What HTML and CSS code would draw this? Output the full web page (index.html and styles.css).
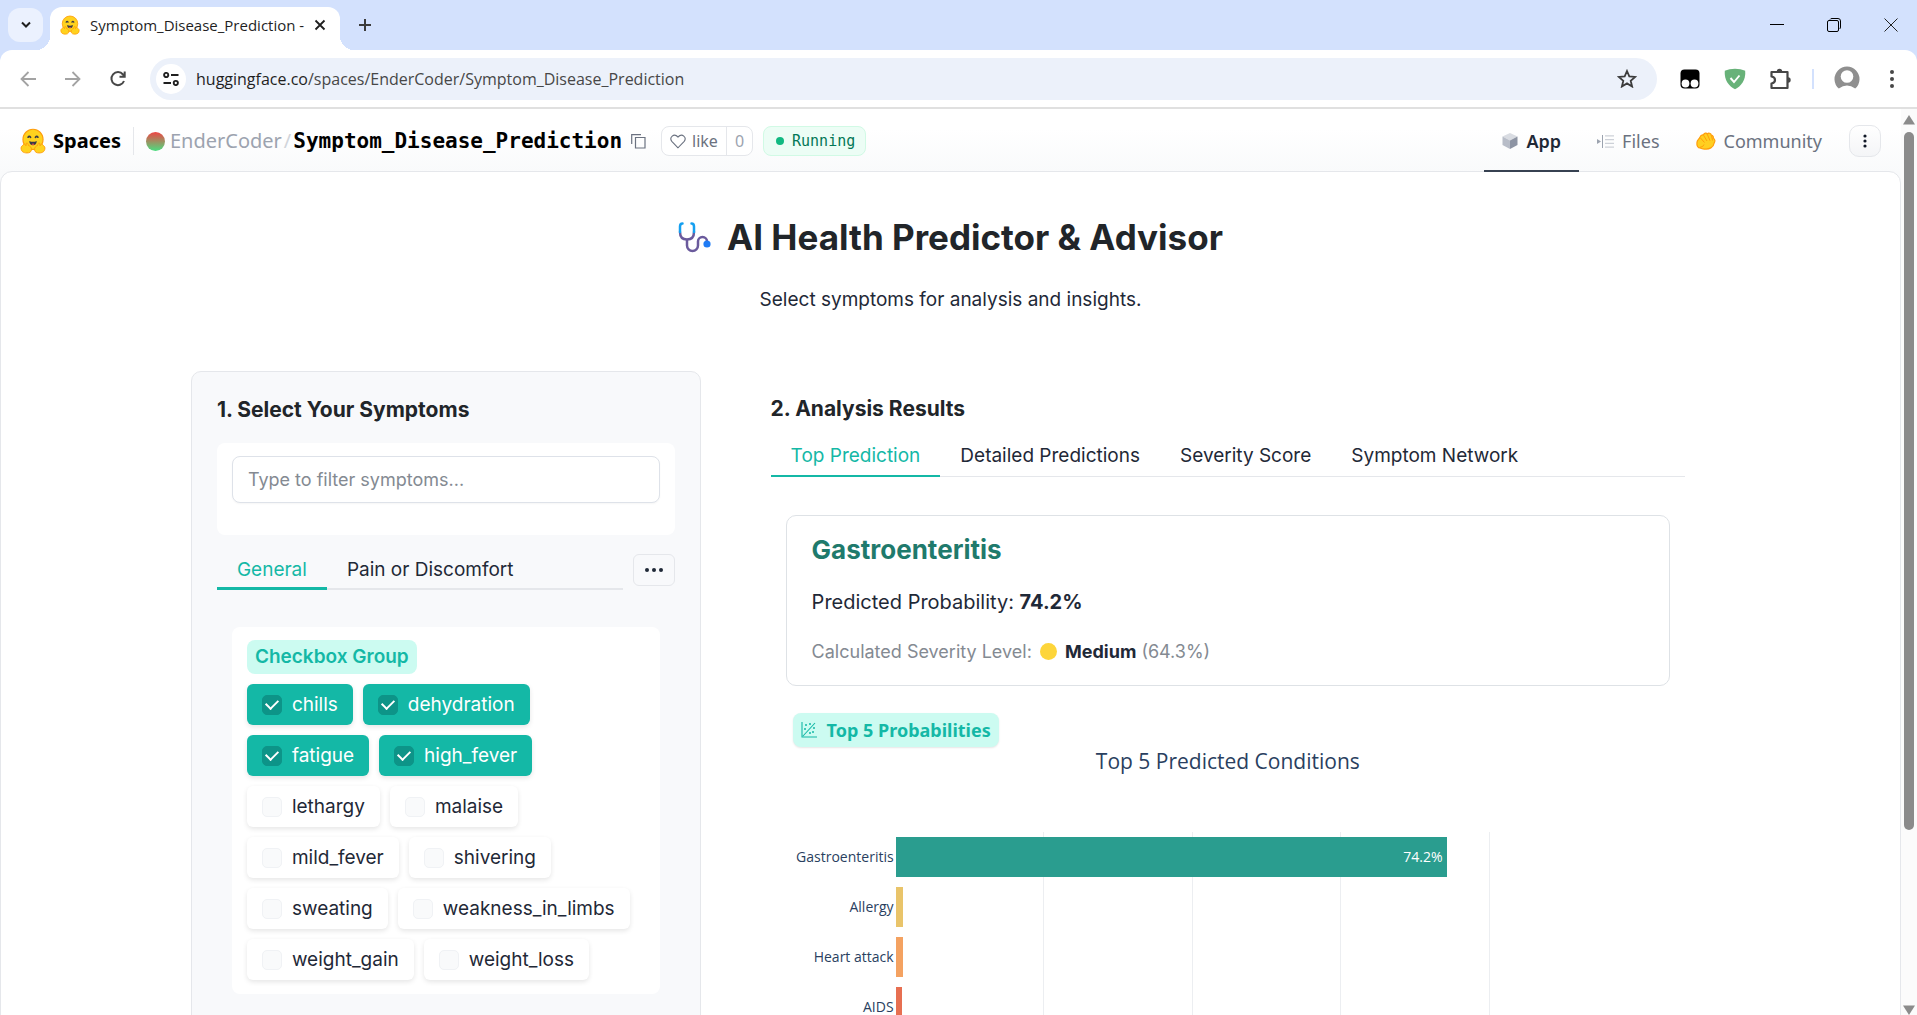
FILE: index.html
```html
<!DOCTYPE html>
<html lang="en">
<head>
<meta charset="utf-8">
<title>Symptom_Disease_Prediction</title>
<link rel="stylesheet" href="styles.css">
</head>
<body>
<svg width="0" height="0" class="defs" aria-hidden="true">
  <defs>
    <symbol id="hug" viewBox="0 0 24 24">
      <circle cx="12" cy="10.500" r="9.300" fill="#ffd21e" stroke="#ff9d0b"/>
      <path d="M7.500 8.500q1-1.500 2.200 0M14.300 8.500q1.200-1.500 2.200 0" stroke="#3a3b45" stroke-width="1.600" fill="none" stroke-linecap="round"/>
      <path d="M8.500 12q3.500 1.600 7 0q-.4 4-3.500 4t-3.500-4z" fill="#3a3b45"/>
      <path d="M10.500 15q1.500-1.200 3 0q-1.500 1.300-3 0z" fill="#ef4e4e"/>
      <path d="M3 15.500c1-1.500 2 0 2.500.8l.3-2.300c1.300-.8 1.800 1 2 2.200c1.600.3 3.200 2 2.700 4.300c-.3 1.800-2 2.500-4 2.500c-3 0-5.500-1-5.500-4.500c0-1.400 1-2 2-3zM21 15.500c-1-1.500-2 0-2.500.8l-.3-2.300c-1.300-.8-1.800 1-2 2.200c-1.600.3-3.200 2-2.700 4.300c.3 1.800 2 2.500 4 2.500c3 0 5.500-1 5.500-4.500c0-1.400-1-2-2-3z" fill="#ffd21e" stroke="#ff9d0b" stroke-width=".9"/>
    </symbol>
  </defs>
</svg>
<div class="browser">
  <header class="tabstrip">
    <button class="tab-search" aria-label="Search tabs"><svg width="12" height="8" viewBox="0 0 12 8"><path d="M2 1.500l4 4 4-4" fill="none" stroke="#1f1f1f" stroke-width="2"/></svg></button>
    <div class="tab">
      <svg width="20" height="20"><use href="#hug"/></svg>
      <span class="tab-title">Symptom_Disease_Prediction - </span>
      <button class="icon-btn" aria-label="Close tab"><svg width="12" height="12" viewBox="0 0 12 12"><path d="M1.500 1.500l9 9M10.500 1.500l-9 9" stroke="#1f1f1f" stroke-width="1.800"/></svg></button>
    </div>
    <button class="icon-btn new-tab" aria-label="New tab"><svg width="14" height="14" viewBox="0 0 14 14"><path d="M7 1v12M1 7h12" stroke="#3c3c3c" stroke-width="2"/></svg></button>
    <div class="window-controls">
      <button class="icon-btn" aria-label="Minimize"><svg width="14" height="14" viewBox="0 0 14 14"><path d="M0 6.500h14" stroke="#000"/></svg></button>
      <button class="icon-btn" aria-label="Restore"><svg width="14" height="14" viewBox="0 0 14 14"><path d="M3 1.500Q3.500.5 5 .5h6Q13.500.5 13.500 3v6q0 1.500-1 2M.5 4q0-1.500 1.500-1.500h8q1.500 0 1.500 1.500v8q0 1.500-1.500 1.500H2Q.5 13.500.5 12z" fill="none" stroke="#000"/></svg></button>
      <button class="icon-btn" aria-label="Close"><svg width="14" height="14" viewBox="0 0 14 14"><path d="M.5.5l13 13M13.500.5l-13 13" stroke="#222"/></svg></button>
    </div>
  </header>
  <div class="toolbar">
    <div class="nav-buttons">
      <button class="icon-btn" aria-label="Back"><svg width="16" height="16" viewBox="0 0 16 16"><path d="M16 8H2M8.500 1L1.500 8l7 7" fill="none" stroke="#a3a3a3" stroke-width="1.800"/></svg></button>
      <button class="icon-btn" aria-label="Forward"><svg width="16" height="16" viewBox="0 0 16 16"><path d="M0 8h14M7.500 1l7 7-7 7" fill="none" stroke="#a3a3a3" stroke-width="1.800"/></svg></button>
      <button class="icon-btn" aria-label="Reload"><svg width="16" height="16" viewBox="0 0 16 16"><path d="M14 10a6.500 6.500 0 1 1-1-6.500L14.500 5M14.700.5v5.200H9.500" fill="none" stroke="#474747" stroke-width="2"/></svg></button>
    </div>
    <div class="omnibox">
      <button class="site-info" aria-label="View site information"><svg width="16" height="14" viewBox="0 0 16 14"><g fill="none" stroke="#1f1f1f" stroke-width="1.900"><circle cx="3.200" cy="3" r="2.100"/><path d="M8 3h7.500M.5 11H8"/><circle cx="12.800" cy="11" r="2.100"/></g></svg></button>
      <div class="url"><span class="host">huggingface.co</span>/spaces/EnderCoder/Symptom_Disease_Prediction</div>
      <button class="icon-btn" aria-label="Bookmark"><svg width="20" height="19" viewBox="0 0 20 19"><path d="M10 2l2.300 5.400 5.900.5-4.500 3.900 1.400 5.700L10 14.400l-5.100 3.100 1.400-5.700L1.800 7.900l5.900-.5z" fill="none" stroke="#3c3c3c" stroke-width="1.800"/></svg></button>
    </div>
    <div class="extensions">
      <button class="icon-btn" aria-label="Tampermonkey"><svg width="20" height="20" viewBox="0 0 20 20"><rect x=".5" y=".5" width="19" height="19" rx="4"/><circle cx="5.500" cy="14.500" r="3.900" fill="#fff"/><circle cx="14.500" cy="14.500" r="3.900" fill="#fff"/></svg></button>
      <button class="icon-btn" aria-label="AdGuard"><svg width="22" height="22" viewBox="0 0 22 22"><path d="M11 .8C7.500.8 3.500 1.500.8 2.800 0 12 5 18.500 11 21.200 17 18.500 22 12 21.200 2.800 18.500 1.500 14.500.8 11 .8z" fill="#68b279"/><path d="M6.500 10l3.500 4 5.500-6.500" fill="none" stroke="#fff" stroke-width="1.900"/></svg></button>
      <button class="icon-btn" aria-label="Extensions"><svg width="22" height="22" viewBox="0 0 22 22"><path d="M1.500 4h16v16h-16v-4.500q3.500-.5 3.500-3.500T1.500 8.500z" fill="none" stroke="#474747" stroke-width="2.200" stroke-linejoin="round"/><path d="M6.800 3.500a2.700 2.700 0 0 1 5.400 0zM18 9.300a2.700 2.700 0 0 1 0 5.400z" fill="#474747"/></svg></button>
    </div>
    <span class="divider"></span>
    <div class="profile">
      <button class="icon-btn" aria-label="Profile"><svg width="26" height="26" viewBox="0 0 26 26"><path d="M4.800 22.500A12.500 12.500 0 1 1 21.200 22.500Q13 16.500 4.800 22.500z" fill="#8f8f8f"/><circle cx="13" cy="10.500" r="6.300" fill="#fff"/></svg></button>
      <button class="icon-btn" aria-label="Menu"><svg width="4" height="18" viewBox="0 0 4 18"><g fill="#474747"><circle cx="2" cy="2" r="2"/><circle cx="2" cy="9" r="2"/><circle cx="2" cy="16" r="2"/></g></svg></button>
    </div>
  </div>
  <div class="viewport">
    <div class="page">
      <header class="space-header">
        <a class="spaces" href="#"><svg width="26" height="26"><use href="#hug"/></svg>Spaces</a>
        <div class="repo">
          <span class="avatar"></span>
          <a class="owner" href="#">EnderCoder</a><span class="slash">/</span><a class="name" href="#">Symptom_Disease_Prediction</a>
          <button class="icon-btn" aria-label="Copy name"><svg width="15" height="15" viewBox="0 0 15 15"><path d="M4.500 3.500h9.500v10.500h-9.500zM.7 10V.7H10" fill="none" stroke="#6b7280" stroke-width="1.200"/></svg></button>
        </div>
        <div class="like">
          <button class="like-btn"><svg width="16" height="15" viewBox="0 0 16 15"><path d="M8 13.800L1.800 7.300C-1 3.800 3.700-1.500 8 3c4.300-4.500 9 .8 6.200 4.300z" fill="none" stroke="#6b7280" stroke-width="1.100"/></svg>like</button>
          <span class="like-count">0</span>
        </div>
        <span class="status">Running</span>
        <nav class="space-nav">
          <a class="nav-item active" href="#"><svg width="16" height="16" viewBox="0 0 16 16"><path d="M8 0l7.500 3.500L8 7.500.5 3.500z" fill="#d9dce2"/><path d="M.5 3.500L8 7.500V16L.5 12z" fill="#b8bdc8"/><path d="M15.500 3.500L8 7.500V16l7.500-4z" fill="#8d94a3"/></svg>App</a>
          <a class="nav-item" href="#"><svg width="17" height="13" viewBox="0 0 17 13"><path d="M0 4l4 2.500L0 9z" fill="#9ca3af"/><path d="M5.500 0v13" stroke="#9ca3af"/><path d="M8 .8h9M8 4.600h9M8 8.400h9M8 12.200h9" stroke="#cdd1d8" stroke-width="1.300"/></svg>Files</a>
          <a class="nav-item" href="#"><svg width="20" height="18" viewBox="0 0 20 18"><path d="M1 11C.5 8.500 3 7.500 3.800 5.500S6 2.500 7.500 3C8 .8 10.500.6 11.300 2.200c1-1.600 3.700-1.200 4 1 1.700.2 2.300 1.700 2 3.100 1.800.6 2 3 .9 4.700C17.500 15.500 13 17.500 9 17c-2.500.3-4-.5-5-1-2 0-3.500-2.500-3-5z" fill="#ffcf20" stroke="#ff9d0b" stroke-width="1.200"/><path d="M7.700 3.500l3.300 5.500M11.500 2.700l2.500 6M15.500 3.500l1 5M4.500 6l4 4.500M3.500 15.500q4-.5 4.500-3" stroke="#ff9d0b" fill="none"/></svg>Community</a>
          <button class="more" aria-label="More"><svg width="4" height="14" viewBox="0 0 4 14"><g fill="#111827"><circle cx="2" cy="2" r="1.600"/><circle cx="2" cy="7" r="1.600"/><circle cx="2" cy="12" r="1.600"/></g></svg></button>
        </nav>
      </header>
      <main class="app">
        <h1 class="title"><svg width="33" height="31" viewBox="0 0 33 31"><g fill="none" stroke-width="2.500" stroke-linecap="round"><path d="M2 10q0 7.500 7 7.500t7-7.500" stroke="#6a5a9c"/><path d="M4.500 1.500Q2 1.500 2 4.500V10M13.500 1.500Q16 1.500 16 4.500V10" stroke="#149ff0"/><path d="M9 18v5.500a5.500 5.500 0 0 0 11 0V19.500a4.500 4.500 0 0 1 9 0" stroke="#6a5a9c"/></g><circle cx="29" cy="22" r="3.600" fill="#1f7cf5"/></svg>AI Health Predictor &amp; Advisor</h1>
        <p class="subtitle">Select symptoms for analysis and insights.</p>
        <div class="columns">
          <section class="symptoms">
            <h2>1. Select Your Symptoms</h2>
            <div class="filter"><input type="text" aria-label="Filter symptoms" placeholder="Type to filter symptoms..."></div>
            <div class="tabs-row">
              <div class="tabs thick"><button class="tab-btn selected">General</button><button class="tab-btn">Pain or Discomfort</button></div>
              <button class="overflow" aria-label="More categories"><svg width="18" height="4" viewBox="0 0 18 4"><g fill="#1f2937"><circle cx="2" cy="2" r="2"/><circle cx="9" cy="2" r="2"/><circle cx="16" cy="2" r="2"/></g></svg></button>
            </div>
            <fieldset class="group" aria-labelledby="group-label">
              <span class="badge" id="group-label">Checkbox Group</span>
              <div class="chips">
                <label class="chip"><input type="checkbox" checked>chills</label>
                <label class="chip"><input type="checkbox" checked>dehydration</label>
                <label class="chip"><input type="checkbox" checked>fatigue</label>
                <label class="chip"><input type="checkbox" checked>high_fever</label>
                <label class="chip"><input type="checkbox">lethargy</label>
                <label class="chip"><input type="checkbox">malaise</label>
                <label class="chip"><input type="checkbox">mild_fever</label>
                <label class="chip"><input type="checkbox">shivering</label>
                <label class="chip"><input type="checkbox">sweating</label>
                <label class="chip"><input type="checkbox">weakness_in_limbs</label>
                <label class="chip"><input type="checkbox">weight_gain</label>
                <label class="chip"><input type="checkbox">weight_loss</label>
              </div>
            </fieldset>
          </section>
          <section class="results">
            <h2>2. Analysis Results</h2>
            <div class="tabs"><button class="tab-btn selected">Top Prediction</button><button class="tab-btn">Detailed Predictions</button><button class="tab-btn">Severity Score</button><button class="tab-btn">Symptom Network</button></div>
            <div class="panel">
              <article class="prediction">
                <h3>Gastroenteritis</h3>
                <p class="probability">Predicted Probability: <strong>74.2%</strong></p>
                <p class="severity">Calculated Severity Level: <span class="dot"></span> <strong>Medium</strong> (64.3%)</p>
              </article>
              <figure class="chart">
                <figcaption class="badge chart-badge"><svg width="16" height="16" viewBox="0 0 16 16"><path d="M1 0v15h15M2 14L14 1" fill="none" stroke="#14b8a6" stroke-width="1.100"/><g fill="#14b8a6"><circle cx="5" cy="3" r="1"/><circle cx="4" cy="7" r="1"/><circle cx="9" cy="2" r="1"/><circle cx="9" cy="11" r="1"/><circle cx="13" cy="6" r="1"/><circle cx="12" cy="10" r="1"/></g></svg>Top 5 Probabilities</figcaption>
                <h4>Top 5 Predicted Conditions</h4>
                <div class="plot">
                  <div class="gridlines"><i></i><i></i><i></i><i></i></div>
                  <div class="rows">
                    <div class="row"><span class="label">Gastroenteritis</span><span class="track"><span class="bar teal" style="width:74.200%">74.2%</span></span></div>
                    <div class="row"><span class="label">Allergy</span><span class="track"><span class="bar yellow" style="width:1%"></span></span></div>
                    <div class="row"><span class="label">Heart attack</span><span class="track"><span class="bar orange" style="width:1%"></span></span></div>
                    <div class="row"><span class="label">AIDS</span><span class="track"><span class="bar red" style="width:0.900%"></span></span></div>
                  </div>
                </div>
              </figure>
            </div>
          </section>
        </div>
      </main>
    </div>
    <div class="scrollbar" aria-hidden="true">
      <svg width="12" height="10" viewBox="0 0 12 10"><path d="M6 0l6 9.500H0z" fill="#8b8b8b"/></svg>
      <div class="scroll-track"><div class="thumb"></div></div>
      <svg width="12" height="10" viewBox="0 0 12 10"><path d="M6 10l6-9.500H0z" fill="#8b8b8b"/></svg>
    </div>
  </div>
</div>
</body>
</html>
```

FILE: styles.css
```css
* { box-sizing: border-box; }
body { margin: 0; font-family: Inter, "Noto Sans", sans-serif; color: #1f2937; background: #fff; }
button { font: inherit; color: inherit; border: 0; background: none; padding: 0; cursor: pointer; }
a { color: inherit; text-decoration: none; }
h1, h2, h3, h4, p, figure { margin: 0; }
svg { display: block; flex: none; }
.defs { position: absolute; }
.icon-btn { display: flex; align-items: center; justify-content: center; }

.browser { height: 100vh; display: flex; flex-direction: column; overflow: hidden; background: #d3e1fd; }
.tabstrip { display: flex; height: 50px; padding: 0 19px 0 8px; font-family: "Open Sans", sans-serif; flex: none; }
.tab-search { width: 35px; height: 34px; margin: 8px 7px 0 0; border-radius: 12px; background: #ebf1fe; display: flex; align-items: center; justify-content: center; }
.tab { width: 290px; margin-top: 7px; padding: 0 14px 8px 10px; background: #fff; border-radius: 12px 12px 0 0; display: flex; align-items: center; justify-content: space-between; position: relative; }
.tab::before, .tab::after { content: ""; position: absolute; bottom: 0; width: 14px; height: 14px; }
.tab::before { left: -14px; background: radial-gradient(circle at 0 0, transparent 14px, #fff 14px); }
.tab::after { right: -14px; background: radial-gradient(circle at 100% 0, transparent 14px, #fff 14px); }
.tab-title { flex: 1; margin-left: 10px; font-size: 15px; line-height: 20px; white-space: nowrap; color: #1f1f1f; }
.new-tab { margin: 0 0 0 18px; }
.window-controls { margin-left: auto; display: flex; gap: 43px; }

.toolbar { height: 59px; flex: none; background: #fff; border-bottom: 2px solid #e0e0e0; border-radius: 12px 12px 0 0; display: flex; align-items: center; padding: 0 23px 0 20px; font-family: "Open Sans", sans-serif; }
.nav-buttons { display: flex; gap: 29px; margin-right: 24px; }
.omnibox { flex: 1; height: 42px; border-radius: 21px; background: #ecf1fa; display: flex; align-items: center; padding: 0 20px 0 6px; gap: 10px; }
.site-info { width: 30px; height: 30px; border-radius: 50%; background: #fff; display: flex; align-items: center; justify-content: center; }
.url { flex: 1; font-size: 16px; line-height: 24px; color: #474747; }
.host { color: #1f1f1f; }
.extensions { display: flex; align-items: center; gap: 24px; margin-left: 23px; }
.divider { width: 2px; height: 20px; margin: 0 20px; background: #d3e1fd; }
.profile { display: flex; align-items: center; gap: 30px; }

.viewport { flex: 1; min-height: 0; display: flex; background: #fafafa; }
.page { flex: 1; min-width: 0; overflow: hidden; background: linear-gradient(#fff 20px, #f9fafb 63px); }
.scrollbar { width: 16px; flex: none; padding: 6px 0 0; display: flex; flex-direction: column; align-items: center; background: #fbfbfb; }
.scroll-track { flex: 1; width: 100%; padding-top: 7px; }
.thumb { width: 10px; height: 80%; margin: 0 auto; border-radius: 5px; background: #8b8b8b; }

.space-header { height: 62px; display: flex; align-items: center; padding: 2px 20px 0 20px; font-family: "Noto Sans", sans-serif; }
.spaces { display: flex; align-items: center; gap: 7px; font-size: 20px; line-height: 28px; font-weight: 700; color: #000; margin-right: 12px; }
.repo { display: flex; align-items: center; font-size: 20px; line-height: 28px; border-left: 1px solid #e5e7eb; padding-left: 12px; }
.avatar { width: 19px; height: 19px; border-radius: 50%; background: linear-gradient(#ef4444, #4ade80); margin-right: 5px; }
.owner { color: #9ca3af; }
.slash { color: #d1d5db; margin: 0 2px; }
.name { font-family: "DejaVu Sans Mono", monospace; font-size: 21px; font-weight: 700; color: #000; margin-right: 9px; }
.like { display: flex; height: 30px; border: 1px solid #e5e7eb; border-radius: 8px; background: #fff; margin: 0 10px 0 15px; color: #6b7280; font-size: 16px; line-height: 20px; }
.like-btn { display: flex; align-items: center; gap: 6px; padding: 0 8px; }
.like-count { border-left: 1px solid #e5e7eb; padding: 4px 8px; color: #9ca3af; }
.status { display: flex; align-items: center; height: 30px; gap: 8px; padding: 0 10px 0 12px; border: 1px solid #d1fae5; border-radius: 8px; background: #ecfdf5; color: #047857; font-family: "DejaVu Sans Mono", monospace; font-size: 15px; }
.status::before { content: ""; width: 8px; height: 8px; border-radius: 50%; background: #10b981; }
.space-nav { margin-left: auto; display: flex; align-items: center; }
.nav-item { height: 62px; display: flex; align-items: center; gap: 8px; padding: 2px 18px 0; font-size: 18px; color: #6b7280; border-bottom: 2px solid transparent; position: relative; z-index: 1; }
.nav-item.active { color: #1f2937; font-weight: 600; border-color: #374151; }
.more { width: 32px; height: 32px; margin-left: 9px; border: 1px solid #e5e7eb; border-radius: 10px; background: linear-gradient(#fff, #f4f5f7); display: flex; align-items: center; justify-content: center; }

.app { background: #fff; border: 1px solid #e5e7eb; border-radius: 12px 12px 0 0; padding-top: 43px; min-height: 100%; }
.title { display: flex; justify-content: center; align-items: center; gap: 16px; font-size: 35px; line-height: 44px; font-weight: 700; color: #212529; }
.subtitle { text-align: center; font-size: 19px; line-height: 26px; margin-top: 28px; }
.columns { width: 80%; margin: 58px auto 0; display: grid; grid-template-columns: 510fr 915fr; gap: 70px; padding-right: 25px; }
h2 { font-size: 21px; line-height: 28px; font-weight: 700; color: #212529; }
.symptoms { background: #f8f9fb; border: 1px solid #e5e7eb; border-radius: 10px; padding: 24px 25px; }
.filter { margin-top: 19px; height: 92px; padding: 13px 15px; background: #fff; border-radius: 8px; }
.filter input { width: 100%; height: 47px; padding: 0 15px; border: 1px solid #dee2e9; border-radius: 8px; background: #fff; font: 18px/24px Inter, sans-serif; color: #1f2937; box-shadow: 0 1px 2px rgba(0,0,0,.04); }
.filter input::placeholder { color: #848a92; }
.tabs-row { display: flex; justify-content: space-between; align-items: center; gap: 10px; margin-top: 15px; }
.tabs { flex: 1; display: flex; box-shadow: inset 0 -1px #e5e7eb; }
.tabs.thick { box-shadow: inset 0 -2px #e5e7eb; }
.tab-btn { padding: 0 20px; height: 40px; font-size: 19px; line-height: 24px; border-bottom: 2px solid transparent; white-space: nowrap; }
.thick .tab-btn { border-bottom-width: 3px; padding-top: 3px; }
.tab-btn.selected { color: #14b8a6; border-color: #14b8a6; }
.overflow { width: 42px; height: 32px; margin-bottom: 1px; border: 1px solid #e5e7eb; border-radius: 6px; display: flex; align-items: center; justify-content: center; }
.group { margin: 37px 15px 0; border: 0; border-radius: 8px; background: #fff; padding: 13px 15px 14px; min-width: 0; }
.badge { display: inline-block; height: 34px; padding: 0 8px; border-radius: 8px; background: #ccfbf1; color: #14b8a6; font-size: 19px; line-height: 34px; font-weight: 600; }
.chips { display: flex; flex-wrap: wrap; gap: 10px; margin-top: 10px; }
.chip { display: flex; align-items: center; gap: 10px; height: 41px; padding: 0 15px; border-radius: 6px; font-size: 19px; line-height: 24px; background: #fff; box-shadow: 0 2px 5px rgba(0,0,0,.1); }
.chip input { appearance: none; margin: 0; width: 20px; height: 20px; border: 1px solid #f0f2f5; border-radius: 5px; background: #f9fafb; display: grid; place-items: center; }
.chip:has(:checked) { background: #14b8a6; color: #fff; }
.chip input:checked { background: #0d9488; border-color: #0d9488; }
.chip input:checked::before { content: ""; width: 6px; height: 10px; border: solid #fff; border-width: 0 2px 2px 0; transform: rotate(45deg); margin-bottom: 3px; }

.results { padding-top: 24px; min-width: 0; }
.results .tabs { margin-top: 14px; }
.panel { padding: 38px 15px 0; }
.prediction { height: 171px; padding: 16px 25px; border: 1px solid #dee2e6; border-radius: 10px; }
.prediction h3 { font-size: 26px; line-height: 36px; color: #1f7a6c; }
.probability { font-size: 20px; line-height: 28px; margin-top: 20px; }
.severity { font-size: 18px; line-height: 28px; margin-top: 22px; color: #848a92; }
.severity strong { color: #1f2937; }
.dot { display: inline-block; width: 17px; height: 17px; border-radius: 50%; background: #fdd53a; vertical-align: -2px; margin: 0 3px; }
.chart { padding-top: 27px; }
.chart-badge { display: flex; width: fit-content; align-items: center; gap: 10px; margin-left: 7px; box-shadow: 0 1px 2px rgba(0,0,0,.1); font-family: "Noto Sans", sans-serif; font-weight: 700; font-size: 18px; }
.chart h4 { font: 400 21px/28px "Open Sans", sans-serif; text-align: center; color: #2a3f5f; }
.plot { display: grid; margin: 57px 32px 0 0; font-family: "Open Sans", sans-serif; font-size: 14px; line-height: 20px; color: #2a3f5f; }
.gridlines, .rows { grid-area: 1 / 1; }
.gridlines { margin-left: 110px; display: grid; grid-template-columns: repeat(5, 1fr); }
.gridlines i { border-right: 1px solid #eceef1; }
.rows { display: grid; gap: 10px; padding: 5px 0 60px; }
.row { display: grid; grid-template-columns: 110px 1fr; align-items: center; }
.label { text-align: right; padding-right: 2px; }
.bar { display: block; height: 40px; line-height: 40px; text-align: right; padding-right: 4px; color: #fff; }
.bar:empty { padding: 0; }
.teal { background: #2a9d8f; }
.yellow { background: #e9c46a; }
.orange { background: #f4a261; }
.red { background: #e76f51; }
```
